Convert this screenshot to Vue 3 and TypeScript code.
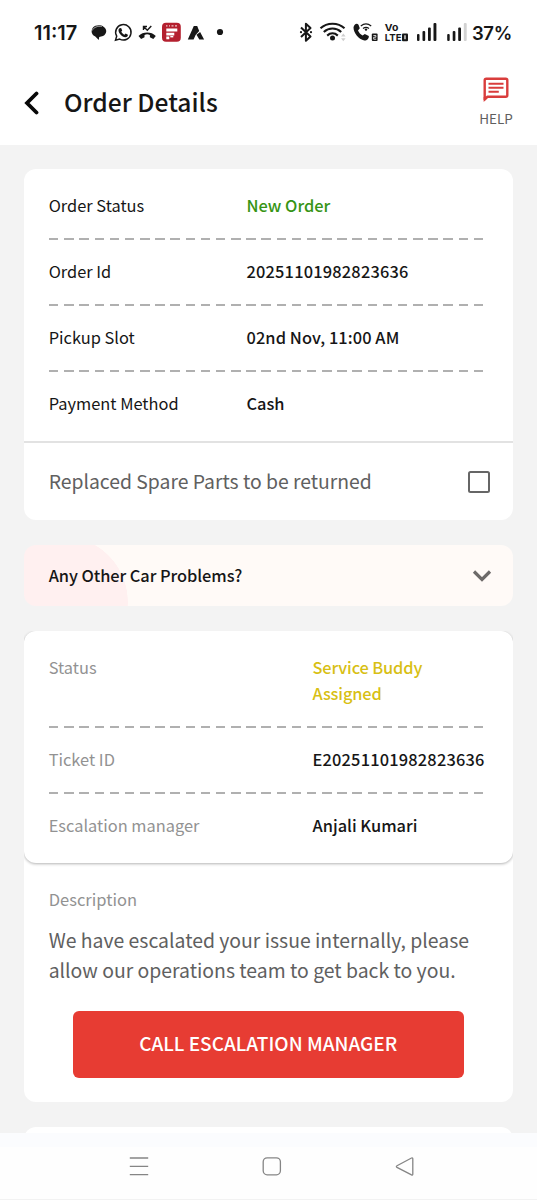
<script setup lang="ts">
interface Row {
  label: string
  value: string
  tone?: string
}

const orderRows: Row[] = [
  { label: 'Order Status', value: 'New Order', tone: 'green' },
  { label: 'Order Id', value: '20251101982823636', tone: 'digits' },
  { label: 'Pickup Slot', value: '02nd Nov, 11:00 AM', tone: 'date' },
  { label: 'Payment Method', value: 'Cash' },
]

const ticketRows: Row[] = [
  { label: 'Status', value: 'Service Buddy Assigned', tone: 'yellow' },
  { label: 'Ticket ID', value: 'E20251101982823636', tone: 'digits' },
  { label: 'Escalation manager', value: 'Anjali Kumari' },
]
</script>

<template>
  <div class="screen">
    <div class="statusbar">
      <span class="clock">11:17</span>
      <svg class="status-left" viewBox="90 20 140 26" width="140" height="26">
        <path d="M93 27.500c2-2.600 8-3 10.500-.8c4 2.300 3.500 7.300-.5 9.300l-3.800.9l-.4 3l-3.500-3.300c-3.700-1.700-4.800-5.800-2.300-9.100z" fill="#171717" />
        <path d="M92.300 30.500c1.200-3.200 5.500-4.800 9.500-4" fill="none" stroke="#fff" stroke-width=".6" />
        <g fill="none" stroke="#171717" stroke-width="1.500">
          <path d="M115.500 40.200l1.200-4a7.700 7.700 0 1 1 3 2.900z" />
        </g>
        <path d="M119.700 28.200l1.400-.1l1.100 2.500l-.9 1.200c.8 1.500 1.800 2.400 3.200 3l1.100-1.200l2.300 1.200c.1 1.600-1.100 2.500-2.600 2.400c-3.500-.6-6.500-3.700-6.800-6.800c0-1 .5-1.800 1.200-2.200z" fill="#171717" />
        <path d="M138.500 36c4.500-4.600 12.800-4.600 17.300 0l-2.500 3.100l-3.400-1.900v-2.300c-2-.7-3.600-.7-5.400 0v2.300l-3.400 1.900z" fill="#171717" />
        <path d="M143.500 30v-3.500h3.500M144 27l3.300 3.200l4-4.200" fill="none" stroke="#171717" stroke-width="1.400" />
        <rect x="162" y="22.800" width="18.800" height="19" rx="4" fill="#b4202f" />
        <path d="M166 25.800h1.500M169 25.800h1M171.500 25.800h2M175 25.800h2" stroke="#efc8cb" stroke-width="1.200" />
        <path d="M166.300 28.500h11v3h-11zM166.300 32.700h8v2.700h-8zM166.300 36.600h3v2.600h-3z" fill="#fff" />
        <path d="M170.300 36.700h3" stroke="#fff" stroke-width="1.400" />
        <path d="M193.800 26h3.400l2 5l-3.600 4l-2 4.400h-5.800zM196.500 34.800l3.600-2.800l4 7.400h-4.800z" fill="#171717" />
        <circle cx="220" cy="32" r="3.100" fill="#171717" />
      </svg>
      <svg class="status-right" viewBox="296 20 172 26" width="172" height="26">
        <path d="M301 27.500l9.500 9l-4.600 4.300V23.800l4.600 4.200l-9.500 9" fill="none" stroke="#171717" stroke-width="2" stroke-linejoin="round" />
        <g fill="#171717"><circle cx="301" cy="32.200" r="1.100" /><circle cx="311" cy="32.200" r="1.100" /></g>
        <g fill="none" stroke="#171717" stroke-width="2.100">
          <path d="M320.500 28.300c6.500-6 17.500-6 24 0" />
          <path d="M323.800 32c5-4.600 12.400-4.600 17.400 0" />
          <path d="M327.200 35.600c3.200-2.900 7.400-2.900 10.600 0" />
        </g>
        <circle cx="332.500" cy="38" r="2.500" fill="#171717" />
        <path d="M341 36.600l2.300-3l2.300 3zM341 38.200l2.300 3l2.300-3z" fill="#cfcfcf" />
        <path d="M354.500 25c1.300-1.600 3-1.700 4-.3l1.300 3.500l-1.800 2.300c1 2.300 2.400 3.900 4.600 5l2.200-1.600l4 2c.3 2.700-1.800 4.700-4.400 4.600c-6-1.200-10.900-7.800-10.900-13c0-1 .5-1.800 1-2.500z" fill="#171717" />
        <path d="M360.800 26c3.200-2.600 7.200-2.600 10.400 0M363 28.400c2-1.500 4-1.500 6 0" fill="none" stroke="#171717" stroke-width="1.200" />
        <circle cx="366" cy="29.600" r="1.200" fill="#171717" />
        <rect x="371.800" y="33.500" width="5.800" height="7.600" rx="1" fill="#171717" />
        <path d="M373.400 35.500h2.500v1.700h-2.200v2h2.500" fill="none" stroke="#fff" stroke-width=".8" />
        <text x="384.800" y="30.800" class="lte" textLength="13.500" lengthAdjust="spacingAndGlyphs">Vo</text>
        <text x="384.800" y="41.200" class="lte" textLength="16.800" lengthAdjust="spacingAndGlyphs">LTE</text>
        <rect x="402" y="33.400" width="6" height="7.800" rx="1" fill="#171717" />
        <path d="M405 35.300v4" stroke="#fff" stroke-width="1.200" />
        <g fill="#171717">
          <rect x="417" y="34" width="2.500" height="7" rx="1" /><rect x="422.500" y="31" width="2.700" height="10" rx="1" />
          <rect x="428" y="27.500" width="2.800" height="13.500" rx="1" /><rect x="433.500" y="23" width="2.900" height="18" rx="1" />
          <rect x="447.200" y="34" width="2.500" height="7" rx="1" /><rect x="452.700" y="31" width="2.700" height="10" rx="1" />
          <rect x="458.200" y="27.500" width="2.800" height="13.500" rx="1" />
        </g>
        <rect x="463.800" y="23" width="2.900" height="18" rx="1" fill="#d2d2d2" />
      </svg>
      <span class="battery">37%</span>
    </div>

    <header class="header">
      <svg class="back" viewBox="0 0 16 24" width="16" height="24"><path d="M12.500 2.500L3 12l9.500 9.500" /></svg>
      <h1>Order Details</h1>
      <div class="help">
        <svg viewBox="0 0 26 26" width="26" height="26" fill="none" stroke="#d93d3c">
          <path d="M1.700 22.500V3.200Q1.700 1.700 3.200 1.700H22.800Q24.300 1.700 24.300 3.200V18.200Q24.300 19.700 22.800 19.700H4.500z" stroke-width="2.400" stroke-linejoin="round" />
          <path d="M.7 20v5l5-5z" fill="#d93d3c" stroke="none" />
          <path d="M5.500 6.800H20.500M5.500 10.800H20.500M5.500 14.800H15.800" stroke-width="2" />
        </svg>
        <span>HELP</span>
      </div>
    </header>

    <main class="content">
      <section class="card order">
        <div v-for="row in orderRows" :key="row.label" class="row">
          <span class="label">{{ row.label }}</span>
          <span class="value" :class="row.tone">{{ row.value }}</span>
        </div>
        <label class="spare">
          <span>Replaced Spare Parts to be returned</span>
          <i class="box"></i>
        </label>
      </section>

      <section class="problems">
        <span>Any Other Car Problems?</span>
        <svg viewBox="0 0 20 14" width="20" height="14"><path d="M2 2.500l8 7.900l8-7.900" /></svg>
      </section>

      <section class="card">
        <div class="ticket">
          <div v-for="row in ticketRows" :key="row.label" class="row">
            <span class="label">{{ row.label }}</span>
            <span class="value" :class="row.tone">{{ row.value }}</span>
          </div>
        </div>
        <div class="description">
          <h2>Description</h2>
          <p>We have escalated your issue internally, please allow our operations team to get back to you.</p>
          <button type="button">CALL ESCALATION MANAGER</button>
        </div>
      </section>

      <section class="card next"></section>
    </main>

    <nav class="navbar">
      <svg viewBox="0 0 20 20" width="20" height="20"><path d="M.8 2h18.400M.8 10.400h18.400M.8 18.700h18.400" /></svg>
      <svg viewBox="0 0 20 20" width="20" height="20"><rect x="1.200" y="1.800" width="17.200" height="17" rx="4" /></svg>
      <svg viewBox="0 0 20 20" width="20" height="20"><path d="M17.800 2.900v15.200q0 1.400-1.300.8L2 11.400q-1.300-.9 0-1.700L16.500 2q1.300-.5 1.300.9z" /></svg>
    </nav>
  </div>
</template>

<style>
body {
  margin: 0;
}
</style>

<style scoped>
.screen {
  width: 537px;
  height: 1200px;
  overflow: hidden;
  display: flex;
  flex-direction: column;
  background: #fff;
  color: #161616;
  font-family: "Noto Sans CJK SC", "Noto Sans", sans-serif;
  font-size: 16.4px;
  line-height: 26px;
}
.statusbar {
  height: 65px;
  flex: none;
  box-sizing: border-box;
  padding: 20px 24px 0 34px;
  display: flex;
  align-items: flex-start;
  font: 600 20px/26px Inter, sans-serif;
}
.clock {
  width: 56px;
  flex: none;
}
.status-left,
.status-right {
  flex: none;
}
.status-right {
  margin: 0 4px 0 66px;
}
.battery {
  font-size: 18.500px;
  letter-spacing: -0.4px;
}
.lte {
  font: 700 9.600px Inter, sans-serif;
  fill: #171717;
}
.header {
  height: 80px;
  flex: none;
  box-sizing: border-box;
  padding: 11px 23px 0 24px;
  display: flex;
  align-items: flex-start;
}
.back {
  margin-top: 15px;
  fill: none;
  stroke: #080808;
  stroke-width: 3.8;
  stroke-linecap: round;
}
h1 {
  flex: 1;
  margin: 7px 0 0 24px;
  font-size: 24.600px;
  line-height: 36px;
  font-weight: 500;
}
.help {
  width: 36px;
  display: flex;
  flex-direction: column;
  align-items: center;
  font-size: 13.500px;
  line-height: 20px;
  color: #5f5f5f;
}
.help svg {
  margin-top: 1px;
}
.help span {
  margin-top: 5px;
}
.content {
  height: 988px;
  flex: none;
  box-sizing: border-box;
  padding: 24px 24px 0;
  background: #f3f3f3;
  overflow: hidden;
  display: flex;
  flex-direction: column;
}
.card {
  background: #fff;
  border-radius: 12px;
  flex: none;
}
.row {
  display: flex;
  margin: 0 29px 0 24.700px;
  padding: 19px 0 21px;
  position: relative;
}
.row + .row::before {
  content: "";
  position: absolute;
  top: -1px;
  left: 0;
  right: 0;
  height: 2px;
  background: repeating-linear-gradient(90deg, #b0b0b0 0 9.500px, transparent 9.500px 15.170px);
}
.label {
  width: 197.800px;
  flex: none;
}
.value {
  font-weight: 500;
  white-space: nowrap;
}
.digits {
  letter-spacing: 0.19px;
}
.date {
  letter-spacing: 0.08px;
}
.order .row:first-child,
.ticket .row:first-child {
  padding-top: 23px;
}
.order {
  height: 351px;
  display: flex;
  flex-direction: column;
}
.green {
  color: #369414;
}
.spare {
  flex: 1;
  margin-top: 4px;
  border-top: 2px solid #e2e2e2;
  padding: 0 23px 0 24.700px;
  display: flex;
  align-items: center;
  justify-content: space-between;
  font-size: 19.350px;
  color: #606060;
}
.spare span {
  padding-bottom: 2px;
}
.box {
  width: 18px;
  height: 18px;
  margin-top: 1px;
  border: 2px solid #666;
  border-radius: 2.500px;
}
.problems {
  height: 61px;
  flex: none;
  box-sizing: border-box;
  margin: 25px 0;
  padding: 0 21px 0 24.700px;
  border-radius: 12px;
  background: radial-gradient(circle at 38px 57px, #fff0f0 65.500px, #fffaf7 66px);
  display: flex;
  align-items: center;
  justify-content: space-between;
  font-weight: 500;
  letter-spacing: -0.06px;
}
.problems span {
  padding-bottom: 2px;
}
.problems svg {
  fill: none;
  stroke: #6d6a69;
  stroke-width: 3.2;
}
.ticket {
  border-radius: 12px;
  box-shadow: 0 1px 3px rgba(0, 0, 0, 0.3);
  height: 232px;
  clip-path: inset(0 0 -5px 0);
}
.ticket .label {
  width: 263.800px;
  color: #929292;
}
.ticket .value {
  margin-right: -4px;
}
.ticket .yellow {
  white-space: normal;
  width: 130px;
  color: #d8bf14;
  letter-spacing: -0.15px;
}
.description {
  height: 239px;
  box-sizing: border-box;
  padding: 23px 24.700px 0;
}
h2 {
  margin: 0;
  font-size: 16.500px;
  font-weight: 400;
  line-height: 26px;
  color: #929292;
}
p {
  margin: 13px 0 0;
  font-size: 19.400px;
  line-height: 30px;
  color: #606060;
}
button {
  display: block;
  width: 391px;
  height: 67px;
  margin: 26px 0 0 24px;
  padding: 0 0 4px;
  border: 0;
  border-radius: 6px;
  background: #e73c33;
  color: #fff;
  font-family: inherit;
  font-size: 19px;
  font-weight: 500;
}
.next {
  height: 60px;
  margin-top: 25px;
}
.navbar {
  height: 67px;
  flex: none;
  box-sizing: border-box;
  padding: 23px 122px 0 129px;
  display: flex;
  justify-content: space-between;
  background: linear-gradient(#fbfcfe 0 14px, #fefefe 14px 66px, #f2f2f2 66px);
}
.navbar svg {
  fill: none;
  stroke: #858585;
  stroke-width: 1.3;
}
</style>
